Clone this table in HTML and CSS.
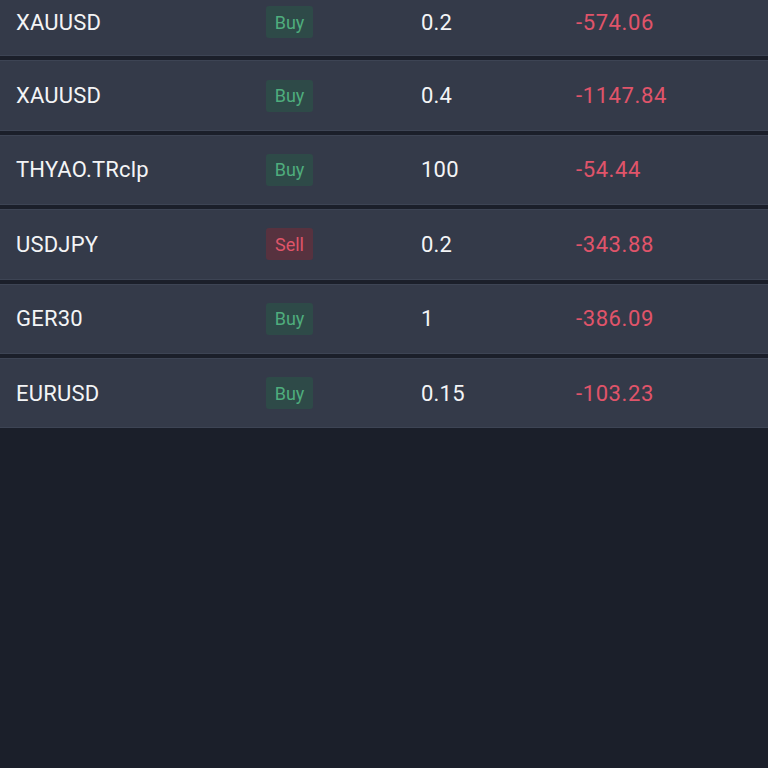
FILE: index.html
```html
<!DOCTYPE html>
<html>
<head>
<meta charset="utf-8">
<link rel="stylesheet" href="styles.css">
</head>
<body>
<div class="list">
  <div class="row first">
    <div class="sym">XAUUSD</div>
    <div class="side"><span class="badge buy">Buy</span></div>
    <div class="vol">0.2</div>
    <div class="pnl">-574.06</div>
  </div>
  <div class="row">
    <div class="sym">XAUUSD</div>
    <div class="side"><span class="badge buy">Buy</span></div>
    <div class="vol">0.4</div>
    <div class="pnl">-1147.84</div>
  </div>
  <div class="row">
    <div class="sym">THYAO.TRclp</div>
    <div class="side"><span class="badge buy">Buy</span></div>
    <div class="vol">100</div>
    <div class="pnl">-54.44</div>
  </div>
  <div class="row">
    <div class="sym">USDJPY</div>
    <div class="side"><span class="badge sell">Sell</span></div>
    <div class="vol">0.2</div>
    <div class="pnl">-343.88</div>
  </div>
  <div class="row">
    <div class="sym">GER30</div>
    <div class="side"><span class="badge buy">Buy</span></div>
    <div class="vol">1</div>
    <div class="pnl">-386.09</div>
  </div>
  <div class="row">
    <div class="sym">EURUSD</div>
    <div class="side"><span class="badge buy">Buy</span></div>
    <div class="vol">0.15</div>
    <div class="pnl">-103.23</div>
  </div>
</div>
</body>
</html>
```
FILE: styles.css
```css
html, body {
  margin: 0;
  padding: 0;
  background: #1b1f2a;
  width: 768px;
  height: 768px;
  overflow: hidden;
  font-family: Roboto, "Liberation Sans", sans-serif;
}
.list {
  display: flex;
  flex-direction: column;
  gap: 4px;
  margin-top: -14px;
}
.row {
  box-sizing: border-box;
  height: 70.4px;
  background: #343a49;
  border-top: 1px solid #3d4454;
  border-bottom: 1px solid #3d4454;
  display: grid;
  grid-template-columns: 250px 155px 155px 1fr;
  align-items: center;
  padding-left: 16px;
  color: #f1f2f4;
  font-size: 22px;
  letter-spacing: 0.2px;
}
.first {
  padding-top: 2px;
}
.sym, .vol {
  color: #f3f4f6;
}
.pnl {
  color: #e0546a;
  letter-spacing: 0.6px;
}
.badge {
  display: inline-flex;
  align-items: center;
  justify-content: center;
  width: 47px;
  height: 32px;
  border-radius: 3px;
  font-size: 18px;
  letter-spacing: 0;
}
.buy {
  background: #2e4a48;
  color: #4fad7d;
}
.sell {
  background: #57323f;
  color: #df5569;
}
```
